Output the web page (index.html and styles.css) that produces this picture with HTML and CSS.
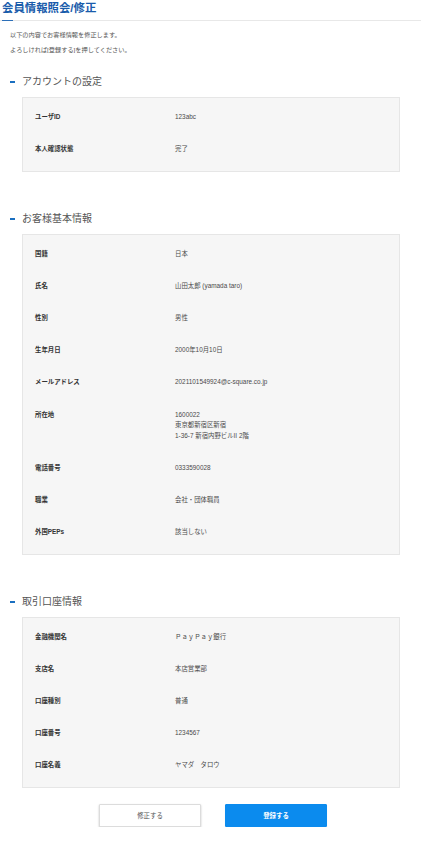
FILE: index.html
```html
<!DOCTYPE html>
<html lang="ja">
<head>
<meta charset="utf-8">
<title>会員情報照会/修正</title>
<link rel="stylesheet" href="styles.css">
</head>
<body>
<header class="page-head">
  <h1 class="page-title">会員情報照会/修正</h1>
</header>
<div class="intro">
  <p>以下の内容でお客様情報を修正します。</p>
  <p>よろしければ[登録する]を押してください。</p>
</div>

<section class="sec">
  <h2 class="sec-title"><span class="dash"></span>アカウントの設定</h2>
  <dl class="box">
    <div class="row"><dt>ユーザID</dt><dd>123abc</dd></div>
    <div class="row"><dt>本人確認状態</dt><dd>完了</dd></div>
  </dl>
</section>

<section class="sec">
  <h2 class="sec-title"><span class="dash"></span>お客様基本情報</h2>
  <dl class="box">
    <div class="row"><dt>国籍</dt><dd>日本</dd></div>
    <div class="row"><dt>氏名</dt><dd>山田太郎 (yamada taro)</dd></div>
    <div class="row"><dt>性別</dt><dd>男性</dd></div>
    <div class="row"><dt>生年月日</dt><dd>2000年10月10日</dd></div>
    <div class="row"><dt>メールアドレス</dt><dd>2021101549924@c-square.co.jp</dd></div>
    <div class="row"><dt>所在地</dt><dd>1600022<br>東京都新宿区新宿<br>1-36-7 新宿内野ビルII 2階</dd></div>
    <div class="row"><dt>電話番号</dt><dd>0333590028</dd></div>
    <div class="row"><dt>職業</dt><dd>会社・団体職員</dd></div>
    <div class="row"><dt>外国PEPs</dt><dd>該当しない</dd></div>
  </dl>
</section>

<section class="sec">
  <h2 class="sec-title"><span class="dash"></span>取引口座情報</h2>
  <dl class="box">
    <div class="row"><dt>金融機関名</dt><dd>ＰａｙＰａｙ銀行</dd></div>
    <div class="row"><dt>支店名</dt><dd>本店営業部</dd></div>
    <div class="row"><dt>口座種別</dt><dd>普通</dd></div>
    <div class="row"><dt>口座番号</dt><dd>1234567</dd></div>
    <div class="row"><dt>口座名義</dt><dd>ヤマダ　タロウ</dd></div>
  </dl>
</section>

<div class="actions">
  <button class="btn btn-sub" type="button">修正する</button>
  <button class="btn btn-main" type="button">登録する</button>
</div>
</body>
</html>
```

FILE: styles.css
```css
html, body {
  margin: 0;
  padding: 0;
  background: #ffffff;
}
body {
  font-family: "Liberation Sans", "Noto Sans CJK JP", sans-serif;
  color: #444;
  width: 421px;
}
.page-head {
  position: relative;
  border-bottom: 1px solid #e8e8e8;
  padding: 1px 0 5px 2px;
}
.page-head::after {
  content: "";
  position: absolute;
  left: 2px;
  bottom: -1px;
  width: 11px;
  height: 1px;
  background: #2c6fb8;
}
.page-title {
  margin: 0;
  font-size: 11.4px;
  line-height: 14px;
  font-weight: bold;
  color: #1a5cab;
}
.intro {
  margin: 6px 0 0 10px;
}
.intro p {
  margin: 0;
  font-size: 6.2px;
  line-height: 15px;
  color: #555;
}
.sec {
  margin: 0 21px 0 0;
}
.sec-title {
  display: flex;
  align-items: center;
  gap: 7px;
  margin: 18px 0 8px 10px;
  font-size: 10px;
  line-height: 14px;
  font-weight: normal;
  color: #555;
}
.sec + .sec .sec-title {
  margin-top: 40px;
}
.dash {
  display: block;
  width: 5px;
  height: 2px;
  background: #1a6fc0;
}
.box {
  margin: 0 0 0 22px;
  padding: 14px 12px 16px 12px;
  background: #f6f6f6;
  border: 1px solid #e6e6e6;
  display: flex;
  flex-direction: column;
  gap: 21.7px;
}
.row {
  display: grid;
  grid-template-columns: 140px 1fr;
  font-size: 6.4px;
  line-height: 10.5px;
}
.row dt {
  margin: 0;
  font-weight: bold;
  color: #333;
}
.row dd {
  margin: 0;
  color: #4a4a4a;
}
.actions {
  display: flex;
  justify-content: center;
  gap: 24px;
  margin-top: 16px;
  padding-left: 5px;
}
.btn {
  width: 102px;
  height: 23px;
  font-family: "Liberation Sans", "Noto Sans CJK JP", sans-serif;
  font-size: 6.4px;
  border-radius: 1px;
  padding: 0;
}
.btn-sub {
  background: #ffffff;
  color: #555;
  border: 1px solid #dcdcdc;
  box-shadow: 0 1px 2px rgba(0, 0, 0, 0.25);
}
.btn-main {
  background: #0b8bee;
  color: #ffffff;
  border: 1px solid #0b8bee;
  font-weight: bold;
  box-shadow: 0 1px 1px rgba(0, 0, 0, 0.12);
}
```
